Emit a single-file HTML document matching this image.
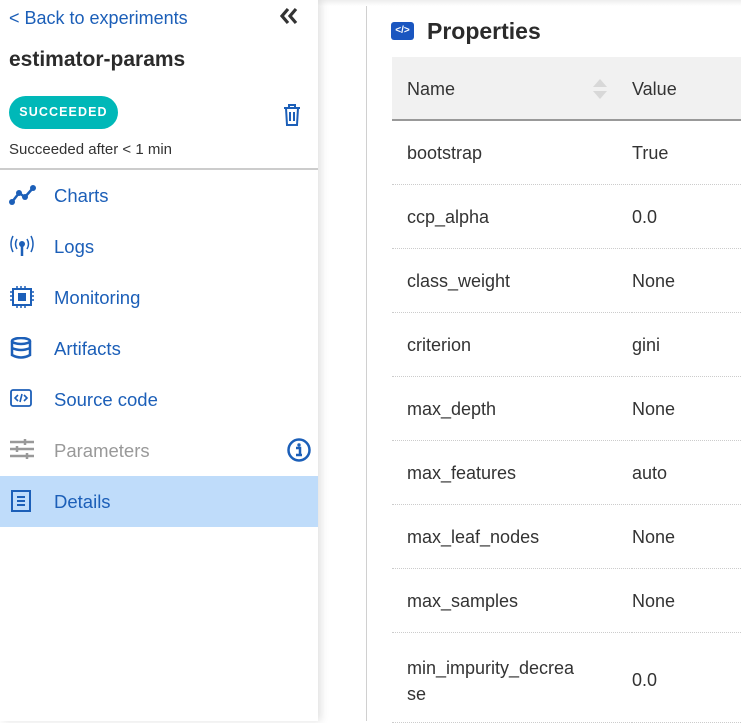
<!DOCTYPE html>
<html><head><meta charset="utf-8"><style>
*{margin:0;padding:0;box-sizing:border-box}
body{width:741px;height:721px;overflow:hidden;background:#fff;font-family:"Liberation Sans",sans-serif;position:relative}
.side{position:absolute;left:0;top:0;width:318px;height:721px;background:#fff;box-shadow:3px 0 8px rgba(0,0,0,.12);z-index:2}
.top{position:absolute;left:0;top:0;width:741px;height:6px;background:linear-gradient(#eee,#fff);z-index:1}
.vline{position:absolute;left:366px;top:0;width:1px;height:721px;background:#d0d0d0}
.back{position:absolute;left:9px;top:8px;font-size:18px;color:#1c5fb8}
.coll{position:absolute;left:279px;top:7px}
h1{position:absolute;left:9px;top:48px;font-size:21px;font-weight:bold;color:#2b2b2b}
.badge{position:absolute;left:9px;top:96px;width:109px;height:33px;border-radius:17px;background:#00b8b8;color:#fff;font-size:12.5px;font-weight:bold;letter-spacing:1.1px;text-align:center;line-height:33px}
.trash{position:absolute;left:283px;top:104px}
.sub{position:absolute;left:9px;top:141px;font-size:15px;color:#333}
.hr{position:absolute;left:0;top:168px;width:318px;height:2px;background:#ccc}
.nav{position:absolute;left:0;width:318px;height:51px;font-size:18.5px;color:#1c5fb8}
.nav span{position:absolute;left:54px;top:15px}
.nav svg{position:absolute;left:9px;top:14px}
.sel{background:#bfdcfa}
.ptitle{position:absolute;left:427px;top:18px;font-size:23px;font-weight:bold;color:#2b2b2b}
.pico{position:absolute;left:391px;top:22px;width:23px;height:18px;background:#1a56c0;border-radius:3px;color:#fff;font-size:10px;font-weight:bold;text-align:center;line-height:18px}
table{position:absolute;left:392px;top:57px;width:349px;border-collapse:collapse;font-size:18px;color:#333}
th{background:#f1f1f1;height:63px;font-weight:normal;text-align:left;border-bottom:2px solid #999;padding-top:2px}
td{height:64px;border-bottom:1px dotted #ccc;line-height:26px;padding-top:2px}
th:first-child,td:first-child{padding-left:15px;width:240px;position:relative}
</style></head><body>
<div class="top"></div>
<div class="vline"></div>
<div class="pico">&lt;/&gt;</div>
<div class="ptitle">Properties</div>
<table>
<tr><th>Name<svg style="position:absolute;left:200px;top:21px" width="16" height="22"><path d="M1 9L8 1L15 9Z M1 13L8 21L15 13Z" fill="#d8d8d8"/></svg></th><th>Value</th></tr>
<tr><td>bootstrap</td><td>True</td></tr>
<tr><td>ccp_alpha</td><td>0.0</td></tr>
<tr><td>class_weight</td><td>None</td></tr>
<tr><td>criterion</td><td>gini</td></tr>
<tr><td>max_depth</td><td>None</td></tr>
<tr><td>max_features</td><td>auto</td></tr>
<tr><td>max_leaf_nodes</td><td>None</td></tr>
<tr><td>max_samples</td><td>None</td></tr>
<tr><td style="height:90px;vertical-align:top;padding-top:22px">min_impurity_decrea<br>se</td><td style="vertical-align:top;padding-top:34px">0.0</td></tr>
</table>
<div class="side">
<div class="back">&lt; Back to experiments</div>
<svg class="coll" width="20" height="18"><path d="M9 2L3 9L9 16M17 2L11 9L17 16" stroke="#333" stroke-width="3.2" fill="none"/></svg>
<h1>estimator-params</h1>
<div class="badge">SUCCEEDED</div>
<svg class="trash" width="18" height="22" viewBox="0 0 18 22"><path d="M1 4H17M6 4V1H12V4M3 4L4 21H14L15 4M7 8V17M11 8V17" stroke="#1c5fb8" stroke-width="2" fill="none"/></svg>
<div class="sub">Succeeded after &lt; 1 min</div>
<div class="hr"></div>
<div class="nav" style="top:170px"><svg width="28" height="22"><path d="M3 18L10 9L16 13L24 4" stroke="#1c5fb8" stroke-width="2.5" fill="none"/><circle cx="3" cy="18" r="3" fill="#1c5fb8"/><circle cx="10" cy="9" r="3" fill="#1c5fb8"/><circle cx="16" cy="13" r="3" fill="#1c5fb8"/><circle cx="24" cy="4" r="3" fill="#1c5fb8"/></svg><span>Charts</span></div>
<div class="nav" style="top:221px"><svg width="26" height="22"><circle cx="13" cy="9" r="3" fill="#1c5fb8"/><path d="M13 10V21" stroke="#1c5fb8" stroke-width="2.5"/><path d="M8 4Q5 9 8 14M18 4Q21 9 18 14M4 1Q0 9 4 17M22 1Q26 9 22 17" stroke="#1c5fb8" stroke-width="1.5" fill="none"/></svg><span>Logs</span></div>
<div class="nav" style="top:272px"><svg width="26" height="22"><rect x="4" y="3" width="18" height="16" stroke="#1c5fb8" stroke-width="2" fill="none"/><rect x="9" y="7" width="8" height="8" fill="#1c5fb8"/><path d="M1 6H4M1 10H4M1 14H4M22 6H25M22 10H25M22 14H25M8 0V3M12 0V3M16 0V3M8 19V22M12 19V22M16 19V22" stroke="#1c5fb8" stroke-width="1.5"/></svg><span>Monitoring</span></div>
<div class="nav" style="top:323px"><svg width="26" height="22"><ellipse cx="12" cy="4" rx="9" ry="3" stroke="#1c5fb8" stroke-width="2.5" fill="none"/><path d="M3 4V18Q12 23 21 18V4M3 11Q12 15 21 11" stroke="#1c5fb8" stroke-width="2.5" fill="none"/></svg><span>Artifacts</span></div>
<div class="nav" style="top:374px"><svg width="26" height="22"><rect x="2" y="2" width="20" height="16" rx="2" stroke="#1c5fb8" stroke-width="1.8" fill="none"/><path d="M9 7L6 10L9 13M15 7L18 10L15 13M13 6L11 14" stroke="#1c5fb8" stroke-width="1.6" fill="none"/></svg><span>Source code</span></div>
<div class="nav" style="top:425px;color:#999"><svg width="26" height="22"><path d="M1 3H25M1 10H25M1 17H25M16 0V6M8 7V13M18 14V20" stroke="#999" stroke-width="2.5"/></svg><span>Parameters</span><svg style="left:287px;top:13px" width="24" height="24"><circle cx="12" cy="12" r="10.5" stroke="#1c5fb8" stroke-width="2.5" fill="none"/><circle cx="12" cy="7" r="1.7" fill="#1c5fb8"/><path d="M9 10H13V17M9 17H15" stroke="#1c5fb8" stroke-width="2.5" fill="none"/></svg></div>
<div class="nav sel" style="top:476px"><svg width="26" height="24"><rect x="3" y="1" width="18" height="20" stroke="#1c5fb8" stroke-width="2" fill="none"/><path d="M8 7H16M8 11H16M8 15H16" stroke="#1c5fb8" stroke-width="2"/></svg><span>Details</span></div>
</div>
</body></html>
